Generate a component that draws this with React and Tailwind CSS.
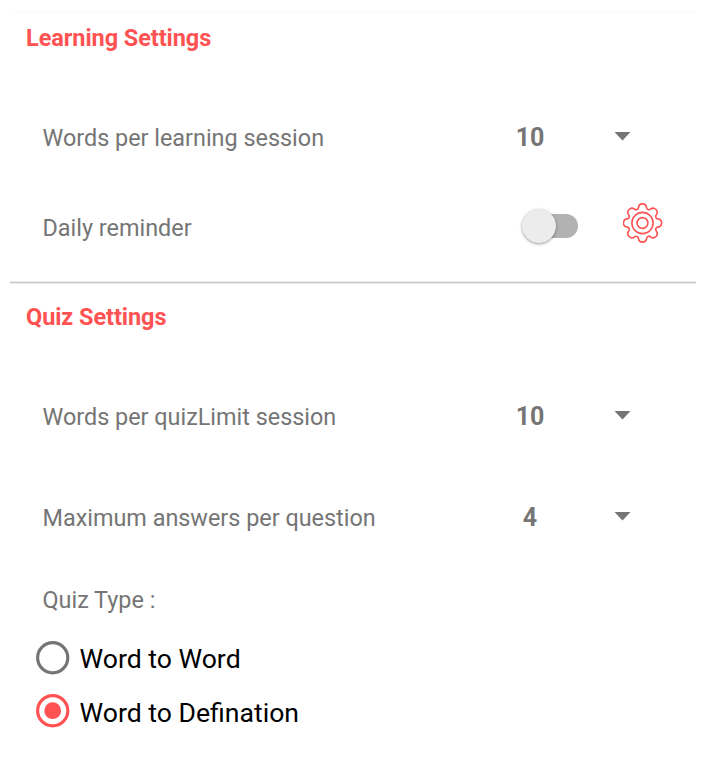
import React from "react";

function Title({ children }) {
  return <h2 className="flex h-7 items-center pl-[26px] text-[23.5px] font-bold tracking-[-0.07px] text-[#ff5252]">{children}</h2>;
}

function NumberRow({ label, value }) {
  return (
    <div className="flex h-10 items-center pl-[42.5px] text-[23.4px] text-[#757575]">
      <span className="w-[457.5px] pt-0.5 whitespace-nowrap">{label}</span>
      <span className="w-[60px] text-center text-[25px] font-bold">{value}</span>
      <svg className="mb-[3px] ml-[54px] h-[9px] w-[17px]" viewBox="0 0 17 9"><path d="M.5 0h16L8.5 8.5z" fill="#757575" /></svg>
    </div>
  );
}

// Eight round lobes joined by tangent concave arcs.
function gearPath() {
  const lobe = 4.1;
  const valley = 2.4;
  const at = (r, deg) => [20 + r * Math.sin((deg * Math.PI) / 180), 20 - r * Math.cos((deg * Math.PI) / 180)];
  const join = (a, b) => a.map((v, i) => (v + (b[i] - v) * (lobe / (lobe + valley))).toFixed(2)).join(" ");
  let d = "";
  for (let i = 0; i < 8; i++) {
    const c = at(15, i * 45);
    const start = join(c, at(16.9, i * 45 - 22.5));
    const end = join(c, at(16.9, i * 45 + 22.5));
    d += i === 0 ? `M${start}` : `A${valley} ${valley} 0 0 0 ${start}`;
    d += `A${lobe} ${lobe} 0 0 1 ${end}`;
  }
  const first = join(at(15, 0), at(16.9, -22.5));
  return `${d}A${valley} ${valley} 0 0 0 ${first}Z`;
}

function Gear() {
  return (
    <svg className="h-10 w-10" viewBox="0 0 40 40" fill="none" stroke="#ff5252" strokeWidth="1.6">
      <g transform="translate(-0.5 0)">
        <path d={gearPath()} />
        <circle cx="20" cy="20" r="10.6" />
        <circle cx="20" cy="20" r="5.4" />
      </g>
    </svg>
  );
}

function Radio({ label, checked }) {
  return (
    <div className="flex h-[53.5px] items-center pl-9 text-[26.6px] text-black">
      <svg className={`size-[34px] ${checked ? "text-[#ff5252]" : "text-[#757575]"}`} viewBox="0 0 34 34">
        <circle cx="16.7" cy="16.7" r="15.1" fill="none" stroke="currentColor" strokeWidth="3.2" />
        {checked && <circle cx="16.7" cy="16.7" r="8.4" fill="currentColor" />}
      </svg>
      <span className="ml-[9.6px] pt-[3px]">{label}</span>
    </div>
  );
}

export default function App() {
  return (
    <main className="h-[767px] w-[706px] overflow-hidden bg-white pt-[11px] font-['Roboto',sans-serif]">
      <hr className="mx-[10px] border-t border-[#fafafa]" />
      <div className="mt-[13px]"><Title>Learning Settings</Title></div>
      <div className="mt-[65px]"><NumberRow label="Words per learning session" value="10" /></div>
      <div className="mt-[45px] flex h-10 items-center pl-[42.5px] text-[23.4px] text-[#757575]">
        <span className="w-[479.5px] pt-[11px]">Daily reminder</span>
        <span className="mt-[5px] flex h-9 w-14 items-center">
          <span className="ml-2 h-6 w-12 shrink-0 rounded-full bg-[#b2b2b2]" />
          <span className="-ml-14 size-[34px] shrink-0 rounded-full bg-[#ececec] shadow-[0_1px_3px_rgba(0,0,0,0.4)]" />
        </span>
        <span className="ml-[45px]"><Gear /></span>
      </div>
      <hr className="mx-[10px] mt-[38px] h-[3px] border-y border-[#eaeaea] bg-[#c9c9c9]" />
      <div className="mt-5"><Title>Quiz Settings</Title></div>
      <div className="mt-[65px]"><NumberRow label="Words per quizLimit session" value="10" /></div>
      <div className="mt-[61px]"><NumberRow label="Maximum answers per question" value="4" /></div>
      <p className="mt-[43px] flex h-10 items-center pl-[42.5px] text-[23.4px] text-[#757575]">Quiz Type :</p>
      <div className="mt-[10px]">
        <Radio label="Word to Word" />
        <Radio label="Word to Defination" checked />
      </div>
    </main>
  );
}
